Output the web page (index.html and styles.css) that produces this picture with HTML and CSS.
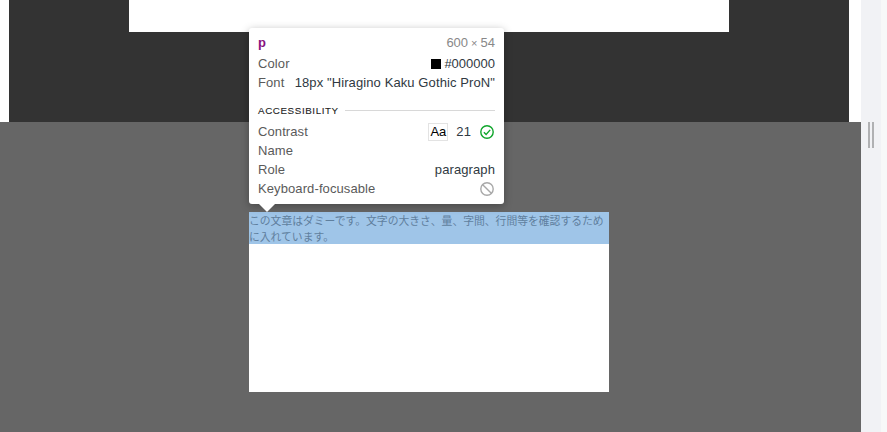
FILE: index.html
```html
<!DOCTYPE html>
<html lang="ja">
<head>
<meta charset="utf-8">
<title>Inspector</title>
<link rel="stylesheet" href="styles.css">
</head>
<body>
<div class="window">
  <main class="viewport">
    <section class="upper">
      <div class="upper-frame">
        <div class="upper-card"></div>
      </div>
    </section>
    <section class="lower">
      <div class="device">
        <p class="dummy">この文章はダミーです。文字の大きさ、量、字間、行間等を確認するために入れています。</p>
      </div>
    </section>
  </main>
  <aside class="sidebar">
    <div class="handle-track">
      <div class="handle"><span class="grip"></span><span class="grip"></span></div>
    </div>
    <div class="side-edge"></div>
  </aside>
</div>

<div class="tooltip">
  <div class="tip-head">
    <span class="tag">p</span>
    <span class="size">600<span class="times">×</span>54</span>
  </div>
  <div class="row"><span class="label">Color</span><span class="value color-value"><span class="swatch"></span>#000000</span></div>
  <div class="row"><span class="label">Font</span><span class="value">18px "Hiragino Kaku Gothic ProN"</span></div>
  <div class="section-title"><span>ACCESSIBILITY</span><span class="rule"></span></div>
  <div class="row"><span class="label">Contrast</span>
    <span class="value contrast"><span class="aa">Aa</span><span class="ratio">21</span>
      <svg class="icon" width="14" height="14" viewBox="0 0 14 14" fill="none"><circle cx="7" cy="7" r="6.2" stroke="#0fa52b" stroke-width="1.4"/><path d="M3.9 7.2l2.2 2.2 4.1-4.5" stroke="#0fa52b" stroke-width="1.4"/></svg>
    </span>
  </div>
  <div class="row"><span class="label">Name</span></div>
  <div class="row"><span class="label">Role</span><span class="value">paragraph</span></div>
  <div class="row"><span class="label">Keyboard-focusable</span>
    <svg class="icon" width="14" height="14" viewBox="0 0 14 14" fill="none"><circle cx="7" cy="7" r="6.2" stroke="#a8a8a8" stroke-width="1.4"/><path d="M2.7 2.7l8.6 8.6" stroke="#a8a8a8" stroke-width="1.4"/></svg>
  </div>
  <span class="arrow"></span>
</div>
</body>
</html>
```

FILE: styles.css
```css
* { box-sizing: border-box; }
html, body { margin: 0; height: 100%; overflow: hidden; background: #fff; }
body { font-family: "Liberation Sans", Arial, sans-serif; }

.window { display: flex; width: 887px; height: 432px; }
.viewport { width: 861px; display: flex; flex-direction: column; }
.upper { height: 122px; padding: 0 12px 0 9px; background: #fff; }
.upper-frame { height: 100%; background: #333; display: flex; justify-content: center; }
.upper-card { width: 600px; height: 32px; background: #fff; }
.lower { flex: 1; background: #666; padding: 90px 0 40px 249px; }
.device { width: 360px; height: 180px; background: #fff; }
.dummy {
  margin: 0; height: 32px; background: #9fc5e8; color: #5f7f9e;
  font: 400 10.8px/16px "Noto Sans CJK JP", sans-serif;
}

.sidebar { width: 26px; display: flex; background: #f1f2f5; }
.handle-track { width: 20px; padding: 122px 0 0 7px; }
.handle { display: flex; gap: 2px; }
.grip { width: 2px; height: 26px; background: #b0b1b3; }
.side-edge { width: 6px; background: #f7f8f8; }

.tooltip {
  position: absolute; left: 249px; top: 28px; width: 255px; height: 176px;
  padding: 5px 9px 0; background: #fff; border-radius: 3px;
  box-shadow: 0 2px 8px rgba(0,0,0,.3);
  font-size: 13px; line-height: 19px; color: #303942; letter-spacing: .1px;
}
.tip-head, .row { display: flex; justify-content: space-between; align-items: center; height: 19px; white-space: nowrap; }
.tip-head { margin-bottom: 2px; }
.tag { color: #881280; font-weight: bold; }
.size { color: #888; font-size: 13px; letter-spacing: 0; }
.times { margin: 0 3px; font-size: 11px; }
.label { color: #5a5a5a; }
.color-value { display: flex; align-items: center; letter-spacing: 0; }
.swatch { width: 10px; height: 10px; background: #000; margin-right: 3px; }
.section-title {
  display: flex; align-items: center; gap: 6px; margin: 9px 0 2px; height: 19px;
  font-size: 9.8px; letter-spacing: .6px; color: #222;
  -webkit-text-stroke: .1px #222;
}
.rule { flex: 1; height: 1px; background: #d8d8d8; }
.contrast { display: flex; align-items: center; }
.aa { width: 20px; height: 18px; line-height: 16px; border: 1px solid #e3e3e3; text-align: center; color: #000; letter-spacing: 0; }
.ratio { margin: 0 9px 0 8px; }
.icon { display: block; margin-right: 1px; }
.arrow {
  position: absolute; left: 10px; top: 176px; width: 0; height: 0;
  border-left: 8px solid transparent; border-right: 8px solid transparent; border-top: 8px solid #fff;
}
```
